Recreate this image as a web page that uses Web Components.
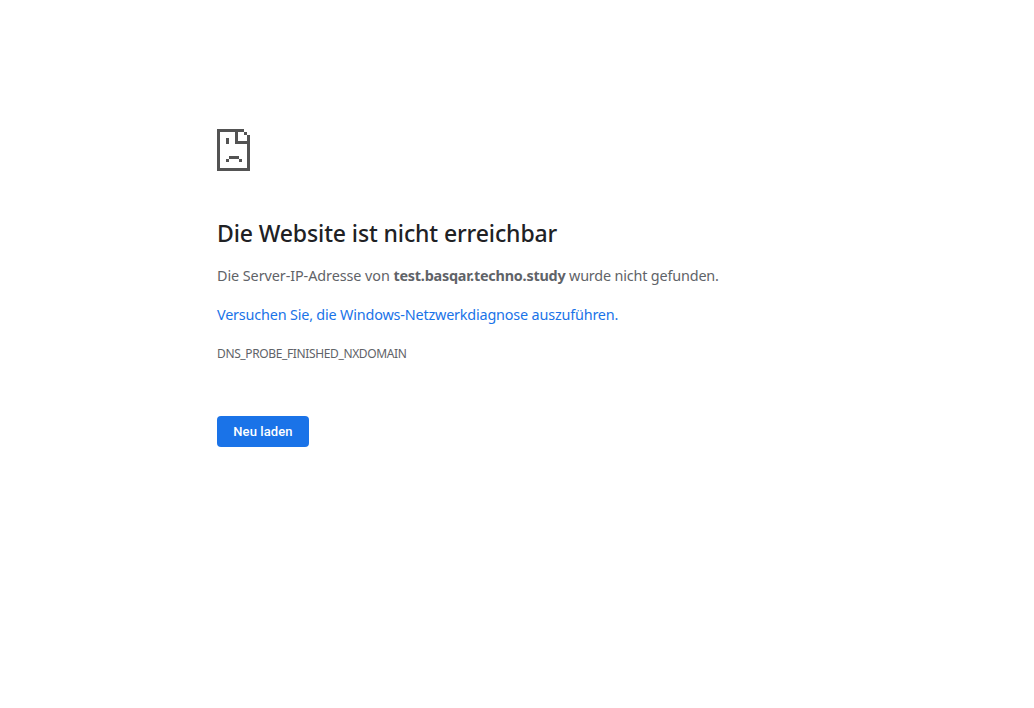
<!DOCTYPE html>
<html lang="de">
<head>
<meta charset="utf-8">
<title>Die Website ist nicht erreichbar</title>
<style>
html, body { margin: 0; background: #fff; }
body { font-family: "Noto Sans", "Segoe UI", sans-serif; color: #5f6368; }
</style>
</head>
<body>
<error-page>
  <sad-page-icon slot="icon"></sad-page-icon>
  <span slot="title">Die Website ist nicht erreichbar</span>
  <error-summary slot="summary"></error-summary>
  <diagnose-link slot="link">Versuchen Sie, die Windows-Netzwerkdiagnose auszuführen.</diagnose-link>
  <span slot="code">DNS_PROBE_FINISHED_NXDOMAIN</span>
  <reload-button slot="action">Neu laden</reload-button>
</error-page>
<script>
const define = (name, html) => customElements.define(name, class extends HTMLElement {
  constructor() {
    super();
    this.attachShadow({ mode: 'open' }).innerHTML = html;
  }
});

define('sad-page-icon', `
<style>:host { display: block; width: 33px; height: 42px; } svg { display: block; }</style>
<svg width="33" height="42" viewBox="0 0 33 42" fill="#535353" shape-rendering="crispEdges" aria-hidden="true">
  <path d="M0 0H27V3H0ZM0 3H3V42H0ZM3 39H33V42H3ZM30 6H33V39H30ZM27 3H30V6H27ZM18 3H21V15H18ZM21 12H30V15H21ZM9 9H12V15H9ZM12 27H22V30H12ZM9 30H12V33H9ZM22 30H25V33H22Z"/>
</svg>`);

define('error-summary', `
<style>
:host { display: block; }
span, b { white-space: pre; }
.a { letter-spacing: -.077px; } b { letter-spacing: -.22px; } .c { letter-spacing: -.17px; }
</style><span class="a">Die Server-IP-Adresse von </span><b>test.basqar.techno.study</b><span class="c"> wurde nicht gefunden.</span>`);

define('diagnose-link', `
<style>:host { display: block; } a { color: #1a73e8; text-decoration: none; letter-spacing: -.18px; }</style>
<a href="#"><slot></slot></a>`);

define('reload-button', `
<style>
:host { display: block; }
button { display: block; box-sizing: border-box; width: 92px; height: 31px; margin: 0; padding: 0; border: 0; border-radius: 4px;
  background: #1a73e8; color: #fff; font: 500 13px/31px Roboto, sans-serif; letter-spacing: .1px; white-space: nowrap; }
</style>
<button type="button"><slot></slot></button>`);

define('error-page', `
<style>
:host { display: block; width: 600px; margin: 0 auto; padding-top: 129px; font-size: 14.4px; line-height: 24px; white-space: nowrap; }
h1 { margin: 46px 0 0; font-size: 23px; font-weight: 500; line-height: 32px; letter-spacing: -.12px; color: #202124; }
.summary { margin-top: 15px; }
.link { margin-top: 15px; }
.code { margin-top: 15px; font-size: 12px; letter-spacing: -.37px; }
.action { margin-top: 50px; }
</style>
<main>
  <slot name="icon"></slot>
  <h1><slot name="title"></slot></h1>
  <div class="summary"><slot name="summary"></slot></div>
  <div class="link"><slot name="link"></slot></div>
  <div class="code"><slot name="code"></slot></div>
  <div class="action"><slot name="action"></slot></div>
</main>`);
</script>
</body>
</html>
